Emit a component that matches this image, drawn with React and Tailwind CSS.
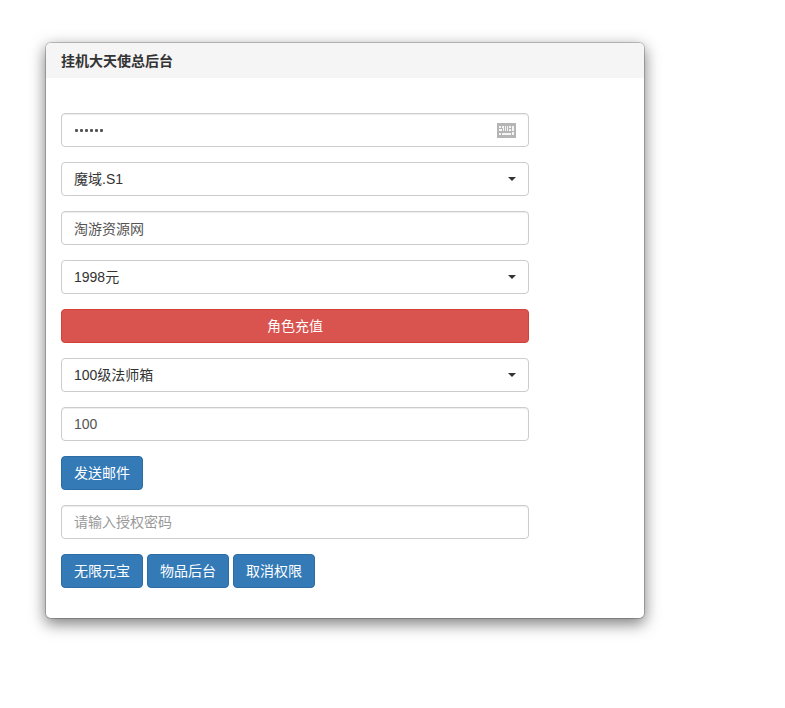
const control =
  'flex h-[34px] w-[468px] items-center rounded border border-[#ccc] bg-white px-3 leading-5';
const field = control + ' text-[#555] shadow-[inset_0_1px_1px_rgba(0,0,0,0.075)]';

function Input({ className = '', ...props }) {
  return <input className={`${field} outline-none placeholder:text-[#999] ${className}`} {...props} />;
}

function Select({ label }) {
  return (
    <button type="button" className={`${control} justify-between text-[#333]`}>
      <span>{label}</span>
      <span className="h-0 w-0 border-x-4 border-t-4 border-x-transparent border-t-[#333]" />
    </button>
  );
}

function Button({ children }) {
  return (
    <button
      type="button"
      className="h-[34px] w-[82px] rounded border border-[#2e6da4] bg-[#337ab7] text-center leading-5 whitespace-nowrap text-white"
    >
      {children}
    </button>
  );
}

function KeyboardIcon() {
  return (
    <svg width="19" height="15" viewBox="0 0 19 15" shapeRendering="crispEdges">
      <path fill="#b5b5b5" d="M0 0h19v15H0z" />
      <path
        fill="#f4f4f4"
        d="M2 3h2v2H2zM5 3h2v2H5zM8 3h1v2H8zM10 3h1v2h-1zM12 3h2v2h-2zM15 3h2v5h-2zM2 6h3v2H2zM6 5h1v3H6zM8 5h1v3H8zM10 5h1v3h-1zM12 6h2v2h-2zM2 10h2v2H2zM5 10h9v2H5zM15 9h2v3h-2z"
      />
    </svg>
  );
}

export default function App() {
  return (
    <div className="min-h-[708px] w-full bg-white pt-[42px] pl-[45px] font-['Liberation_Sans','Noto_Sans_CJK_SC',sans-serif] text-sm text-[#333]">
      <div className="h-[577px] w-[600px] overflow-hidden rounded-md border border-black/20 bg-white bg-clip-padding shadow-[0_5px_15px_rgba(0,0,0,0.5)]">
        <h1 className="flex h-[35px] items-center bg-[#f5f5f5] px-[15px] text-sm leading-5 font-bold">
          挂机大天使总后台
        </h1>
        <form className="flex flex-col gap-[15px] px-[15px] pt-[35px]">
          <div className={`${field} justify-between`}>
            <span className="flex gap-0.5 pt-px pl-px" aria-label="密码">
              {[0, 1, 2, 3, 4, 5].map((dot) => (
                <span key={dot} className="size-[3px] rounded-[1px] bg-[#555]" />
              ))}
            </span>
            <KeyboardIcon />
          </div>
          <Select label="魔域.S1" />
          <Input defaultValue="淘游资源网" />
          <Select label="1998元" />
          <button
            type="button"
            className="h-[34px] w-[468px] rounded border border-[#d43f3a] bg-[#d9534f] text-center leading-5 text-white"
          >
            角色充值
          </button>
          <Select label="100级法师箱" />
          <Input defaultValue="100" />
          <div className="flex">
            <Button>发送邮件</Button>
          </div>
          <Input placeholder="请输入授权密码" />
          <div className="flex gap-1">
            <Button>无限元宝</Button>
            <Button>物品后台</Button>
            <Button>取消权限</Button>
          </div>
        </form>
      </div>
    </div>
  );
}
